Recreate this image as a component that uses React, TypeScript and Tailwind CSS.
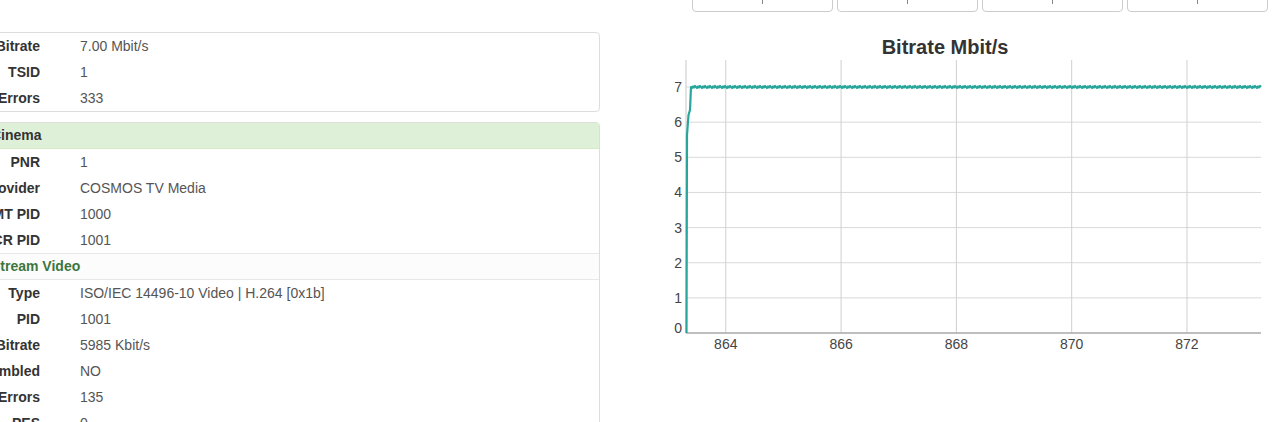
import React from 'react';

type Row = { label: string; value: string };

const transportRows: Row[] = [
    { label: 'Bitrate', value: '7.00 Mbit/s' },
    { label: 'TSID', value: '1' },
    { label: 'Errors', value: '333' },
];

const programRows: Row[] = [
    { label: 'PNR', value: '1' },
    { label: 'Provider', value: 'COSMOS TV Media' },
    { label: 'PMT PID', value: '1000' },
    { label: 'PCR PID', value: '1001' },
];

const videoRows: Row[] = [
    { label: 'Type', value: 'ISO/IEC 14496-10 Video | H.264 [0x1b]' },
    { label: 'PID', value: '1001' },
    { label: 'Bitrate', value: '5985 Kbit/s' },
    { label: 'Scrambled', value: 'NO' },
    { label: 'Errors', value: '135' },
    { label: 'PES', value: '0' },
];

const InfoRow: React.FC<{ row: Row }> = ({ row }) => (
    <div className="grid grid-cols-[139px_1fr] h-[26px] items-center">
        <div className="text-right pr-[40px] font-bold text-[#333]">{row.label}</div>
        <div className="text-[#555]">{row.value}</div>
    </div>
);

// plot geometry (svg coords)
const PLOT_LEFT = 56;
const PLOT_RIGHT = 631;
const PLOT_TOP = 2;
const PLOT_BOTTOM = 275;
const yPx = (v: number) => PLOT_BOTTOM - v * 35.14;
const xPx = (t: number) => PLOT_LEFT + (t - 863.31) * 57.65;

const buildLine = () => {
    let d = 'M56.5 275 L57 77 L58.5 57 L60 52 L61 29';
    for (let x = 62; x <= PLOT_RIGHT; x += 1) {
        const jitter = ((x * 7) % 5) - 2;
        d += ` L${x} ${(29 + jitter * 0.5).toFixed(1)}`;
    }
    return d;
};

const BitrateChart: React.FC = () => {
    const yTicks = [0, 1, 2, 3, 4, 5, 6, 7];
    const xTicks = [864, 866, 868, 870, 872];
    return (
        <svg width="640" height="300" className="block overflow-visible" style={{ fontFamily: '"Liberation Sans", Arial, sans-serif' }}>
            {yTicks.filter(v => v > 0).map(v => (
                <line key={`h${v}`} x1={PLOT_LEFT} x2={PLOT_RIGHT} y1={yPx(v)} y2={yPx(v)} stroke="#d9d9d9" strokeWidth="1" />
            ))}
            {xTicks.map(t => (
                <line key={`v${t}`} x1={xPx(t)} x2={xPx(t)} y1={PLOT_TOP} y2={PLOT_BOTTOM} stroke="#d0d0d0" strokeWidth="1" />
            ))}
            <line x1={PLOT_LEFT} x2={PLOT_LEFT} y1={PLOT_TOP} y2={PLOT_BOTTOM} stroke="#c8c8c8" strokeWidth="1" />
            <line x1={PLOT_LEFT} x2={PLOT_RIGHT} y1={PLOT_BOTTOM} y2={PLOT_BOTTOM} stroke="#a8a8a8" strokeWidth="1.5" />
            {yTicks.map(v => (
                <text key={`yl${v}`} x={52} y={yPx(v) + (v === 0 ? 0 : 5)} textAnchor="end" fontSize="14" fill="#444">{v}</text>
            ))}
            {xTicks.map(t => (
                <text key={`xl${t}`} x={xPx(t)} y={291} textAnchor="middle" fontSize="14" fill="#444">{t}</text>
            ))}
            <path d={buildLine()} fill="none" stroke="#2aa59b" strokeWidth="2.2" strokeLinejoin="round" />
        </svg>
    );
};

export default function App() {
    return (
        <div className="w-[1280px] h-[422px] overflow-hidden bg-white text-[14px] flex" style={{ fontFamily: '"Liberation Sans", Arial, sans-serif' }}>
            {/* left: stream info */}
            <div className="ml-[-60px] w-[660px] shrink-0 pt-[32px]">
                <div className="border border-[#ddd] rounded-[4px]">
                    {transportRows.map(r => <InfoRow key={r.label} row={r} />)}
                </div>
                <div className="mt-[10px] border border-[#ddd] rounded-t-[4px]">
                    <div className="h-[26px] bg-[#dff0d8] pl-[50px] flex items-center font-bold text-[#333] border-b border-[#d6e9c6]">Cinema</div>
                    {programRows.map(r => <InfoRow key={r.label} row={r} />)}
                    <div className="h-[27px] bg-[#fcfcfc] border-y border-[#e8e8e8] pl-[50px] flex items-center font-bold text-[#3c763d]">Stream Video</div>
                    {videoRows.map(r => <InfoRow key={r.label + r.value} row={r} />)}
                </div>
            </div>

            {/* right: chart */}
            <div className="ml-[30px] w-[630px] shrink-0 flex flex-col">
                <div className="mt-[-23px] ml-[62px] flex gap-[4px]">
                    {[0, 1, 2, 3].map(i => (
                        <div key={i} className="w-[141px] h-[35px] shrink-0 border border-[#ccc] rounded-[4px] flex items-end justify-center">
                            <div className="w-[1px] h-[4px] bg-[#888] mb-[7px]" />
                        </div>
                    ))}
                </div>
                <div className="mt-[23px] h-[24px] text-center text-[20px] font-bold text-[#333] leading-[24px]">Bitrate Mbit/s</div>
                <div className="mt-[-1px]">
                    <BitrateChart />
                </div>
            </div>
        </div>
    );
}
